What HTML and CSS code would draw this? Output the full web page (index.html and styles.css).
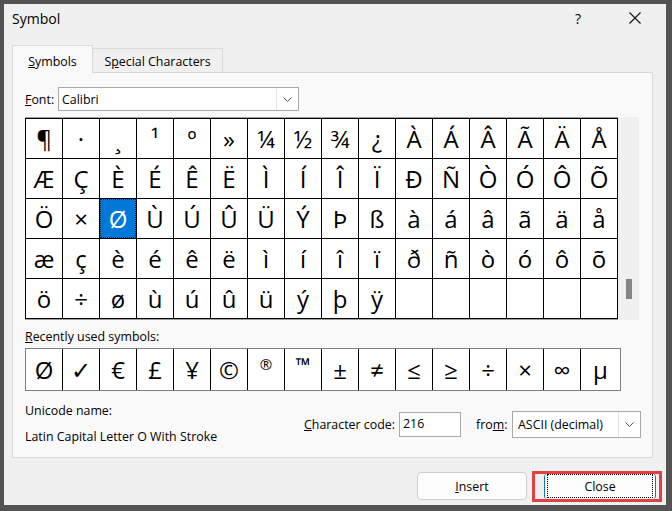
FILE: index.html
```html
<!DOCTYPE html>
<html>
<head>
<meta charset="utf-8">
<title>Symbol</title>
<link rel="stylesheet" href="styles.css">
</head>
<body>
<div class="window">
  <div class="titlebar">
    <span class="title">Symbol</span>
    <span class="help">?</span>
    <span class="xbtn"><svg width="12" height="12" viewBox="0 0 12 12"><path d="M0.5 0.5 L11.5 11.5 M11.5 0.5 L0.5 11.5" stroke="#111" stroke-width="1.1" fill="none"/></svg></span>
  </div>
  <div class="tabs">
    <div class="tab tab-active"><span><u>S</u>ymbols</span></div>
    <div class="tab tab-inactive"><span>S<u>p</u>ecial Characters</span></div>
    <div class="tab-fill"></div>
  </div>
  <div class="panel">
    <div class="font-row">
      <span class="font-label"><u>F</u>ont:</span>
      <div class="combo font-combo">
        <span class="combo-text">Calibri</span>
        <span class="combo-btn"><svg width="9" height="5" viewBox="0 0 9 5"><polyline points="0.5,0.5 4.5,4.5 8.5,0.5" fill="none" stroke="#555" stroke-width="1"/></svg></span>
      </div>
    </div>
    <div class="grid-row">
      <div class="charmap">
        <div class="charmap-grid">
          <div class="cell">¶</div><div class="cell">·</div><div class="cell">¸</div><div class="cell">¹</div><div class="cell">º</div><div class="cell">»</div><div class="cell">¼</div><div class="cell">½</div><div class="cell">¾</div><div class="cell">¿</div><div class="cell">À</div><div class="cell">Á</div><div class="cell">Â</div><div class="cell">Ã</div><div class="cell">Ä</div><div class="cell">Å</div>
          <div class="cell">Æ</div><div class="cell">Ç</div><div class="cell">È</div><div class="cell">É</div><div class="cell">Ê</div><div class="cell">Ë</div><div class="cell">Ì</div><div class="cell">Í</div><div class="cell">Î</div><div class="cell">Ï</div><div class="cell">Ð</div><div class="cell">Ñ</div><div class="cell">Ò</div><div class="cell">Ó</div><div class="cell">Ô</div><div class="cell">Õ</div>
          <div class="cell">Ö</div><div class="cell">×</div><div class="cell sel">Ø</div><div class="cell">Ù</div><div class="cell">Ú</div><div class="cell">Û</div><div class="cell">Ü</div><div class="cell">Ý</div><div class="cell">Þ</div><div class="cell">ß</div><div class="cell">à</div><div class="cell">á</div><div class="cell">â</div><div class="cell">ã</div><div class="cell">ä</div><div class="cell">å</div>
          <div class="cell">æ</div><div class="cell">ç</div><div class="cell">è</div><div class="cell">é</div><div class="cell">ê</div><div class="cell">ë</div><div class="cell">ì</div><div class="cell">í</div><div class="cell">î</div><div class="cell">ï</div><div class="cell">ð</div><div class="cell">ñ</div><div class="cell">ò</div><div class="cell">ó</div><div class="cell">ô</div><div class="cell">õ</div>
          <div class="cell">ö</div><div class="cell">÷</div><div class="cell">ø</div><div class="cell">ù</div><div class="cell">ú</div><div class="cell">û</div><div class="cell">ü</div><div class="cell">ý</div><div class="cell">þ</div><div class="cell">ÿ</div><div class="cell"></div><div class="cell"></div><div class="cell"></div><div class="cell"></div><div class="cell"></div><div class="cell"></div>
        </div>
      </div>
      <div class="scrollbar"><div class="thumb"></div></div>
    </div>
    <div class="recent-label"><u>R</u>ecently used symbols:</div>
    <div class="recent">
      <div class="rcell">Ø</div><div class="rcell">✓</div><div class="rcell">€</div><div class="rcell">£</div><div class="rcell">¥</div><div class="rcell">©</div><div class="rcell sup">®</div><div class="rcell tm">™</div><div class="rcell">±</div><div class="rcell">≠</div><div class="rcell">≤</div><div class="rcell">≥</div><div class="rcell">÷</div><div class="rcell">×</div><div class="rcell">∞</div><div class="rcell">μ</div>
    </div>
    <div class="bottom-row">
      <div class="uname">
        <div class="uname-label">Unicode name:</div>
        <div class="uname-value">Latin Capital Letter O With Stroke</div>
      </div>
      <div class="code-group">
        <span class="code-label"><u>C</u>haracter code:</span>
        <div class="code-input">216</div>
        <span class="from-label">fro<u>m</u>:</span>
        <div class="combo from-combo">
          <span class="combo-text from-text">ASCII (decimal)</span>
          <span class="combo-btn"><svg width="9" height="5" viewBox="0 0 9 5"><polyline points="0.5,0.5 4.5,4.5 8.5,0.5" fill="none" stroke="#555" stroke-width="1"/></svg></span>
        </div>
      </div>
    </div>
  </div>
  <div class="buttons">
    <div class="btn btn-insert"><span><u>I</u>nsert</span></div>
    <div class="hl">
      <div class="btn-close"><div class="focus">Close</div></div>
    </div>
  </div>
</div>
</body>
</html>
```
FILE: styles.css
```css
body {
  margin: 0;
  background: #535353;
  font-family: "Open Sans", "Noto Sans", sans-serif;
  font-size: 12.4px;
  color: #000;
}
.window {
  margin: 4px 6px 6px 4px;
  width: 662px;
  height: 501px;
  background: #f0f0f0;
  display: flex;
  flex-direction: column;
}
.titlebar {
  height: 28px;
  display: flex;
  align-items: center;
  padding-left: 8px;
}
.title {
  flex: 1;
  font-size: 14px;
}
.help {
  width: 20px;
  text-align: center;
  font-size: 14px;
}
.xbtn {
  display: flex;
  margin-left: 41px;
  margin-right: 25px;
}
.tabs {
  display: flex;
  align-items: flex-end;
  margin: 13px 0 0 8px;
  width: 641px;
  height: 28px;
}
.tab {
  box-sizing: border-box;
  display: flex;
  align-items: center;
  justify-content: center;
}
.tab-active {
  width: 81px;
  height: 28px;
  background: #f9f9f9;
  border: 1px solid #d9d9d9;
  border-bottom: none;
  padding-top: 3px;
}
.tab-inactive {
  width: 130px;
  height: 25px;
  background: #f0f0f0;
  border: 1px solid #d9d9d9;
  border-left: none;
  padding-top: 1px;
}
.tab-fill {
  flex: 1;
  border-bottom: 1px solid #d9d9d9;
}
.panel {
  margin-left: 8px;
  width: 641px;
  height: 385px;
  box-sizing: border-box;
  background: #f9f9f9;
  border: 1px solid #d9d9d9;
  border-top: none;
  padding: 14px 11px 0 12px;
  display: flex;
  flex-direction: column;
}
.font-row {
  display: flex;
  align-items: center;
  height: 24px;
}
.font-label {
  width: 33px;
}
.combo {
  display: flex;
  align-items: stretch;
  background: #fff;
  border: 1px solid #a9a9a9;
  box-sizing: border-box;
}
.font-combo {
  width: 241px;
  height: 24px;
}
.combo-text {
  flex: 1;
  display: flex;
  align-items: center;
  padding-left: 3px;
}
.combo-btn {
  width: 21px;
  border-left: 1px solid #e3e3e3;
  display: flex;
  align-items: center;
  justify-content: center;
}
.grid-row {
  display: flex;
  margin-top: 6px;
}
.charmap {
  border-top: 1px solid #a0a0a0;
  border-bottom: 1px solid #a0a0a0;
}
.charmap-grid {
  display: grid;
  grid-template-columns: repeat(16, 36px);
  grid-template-rows: repeat(5, 39px);
  gap: 1px;
  padding: 1px;
  background: #000;
}
.cell {
  background: #fff;
  font-size: 24px;
  line-height: 39px;
  text-align: center;
}
.sel {
  background: #0078d7;
  color: #fff;
  outline: 1px dotted #222;
  outline-offset: -1px;
}
.scrollbar {
  width: 21px;
  height: 203px;
  box-sizing: border-box;
  background: #f0f0f0;
  padding-top: 162px;
  display: flex;
  flex-direction: column;
  align-items: center;
}
.thumb {
  width: 6px;
  height: 20px;
  background: #858585;
}
.recent-label {
  margin-top: 9px;
  line-height: 16px;
}
.recent {
  margin-top: 3px;
  width: 596px;
  height: 43px;
  box-sizing: border-box;
  border: 1px solid #7f7f7f;
  background: #000;
  display: grid;
  grid-template-columns: repeat(15, 36px) 1fr;
  gap: 1px;
}
.rcell {
  background: #fff;
  font-size: 24px;
  line-height: 41px;
  text-align: center;
  font-family: "Open Sans", "DejaVu Sans", sans-serif;
}
.rcell.sup {
  font-size: 15px;
  line-height: 30px;
}
.rcell.tm {
  font-size: 19px;
  line-height: 33px;
  font-weight: 700;
}
.bottom-row {
  display: flex;
  justify-content: space-between;
  margin-top: 12px;
}
.uname-label,
.uname-value {
  line-height: 16px;
}
.uname-value {
  margin-top: 10px;
}
.code-group {
  display: flex;
  align-items: center;
  margin-top: 8px;
  align-self: flex-start;
}
.code-label {
  margin-right: 4px;
}
.code-input {
  width: 62px;
  height: 25px;
  box-sizing: border-box;
  border: 1px solid #a9a9a9;
  background: #fff;
  padding: 0 3px 2px;
  display: flex;
  align-items: center;
}
.from-label {
  width: 34px;
  margin-left: 15px;
  margin-right: 2px;
}
.from-combo {
  width: 129px;
  height: 27px;
}
.from-text {
  padding-left: 5px;
}
.buttons {
  display: flex;
  justify-content: flex-end;
  align-items: flex-start;
  margin-top: 13px;
  padding-right: 4px;
}
.btn {
  box-sizing: border-box;
  display: flex;
  align-items: center;
  justify-content: center;
}
.btn-insert {
  width: 110px;
  height: 28px;
  margin-top: 1px;
  margin-right: 5px;
  border: 1px solid #cfcfcf;
  border-radius: 4px;
  background: #fdfdfd;
}
.hl {
  width: 130px;
  height: 31px;
  box-sizing: border-box;
  border: 3px solid #e0403f;
  display: flex;
}
.btn-close {
  margin-left: 9px;
  width: 112px;
  box-sizing: border-box;
  border-left: 1px solid #1a73c8;
  border-right: 1px solid #1a73c8;
  border-radius: 3px;
  background: #fdfdfd;
  padding: 0 2px 1px 2px;
  display: flex;
}
.focus {
  flex: 1;
  border: 1px dotted #000;
  display: flex;
  align-items: center;
  justify-content: center;
}
```
